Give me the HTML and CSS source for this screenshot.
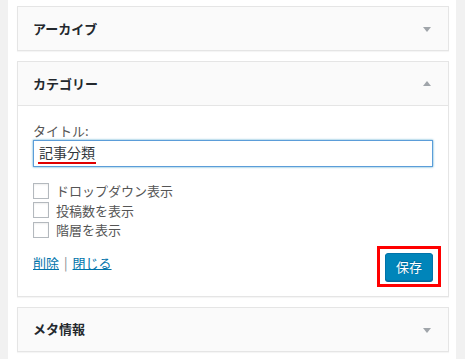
FILE: index.html
```html
<!DOCTYPE html>
<html lang="ja">
<head>
  <meta charset="UTF-8">
  <meta name="viewport" content="width=device-width, initial-scale=1.0">
  <title>ウィジェット</title>
  <link rel="stylesheet" href="styles.css">
</head>
<body>
  <div class="sidebar">
    <!-- Archive widget (closed) -->
    <div class="widget">
      <div class="widget-top">
        <h3 class="widget-title">アーカイブ</h3>
        <span class="toggle down"></span>
      </div>
    </div>

    <!-- Category widget (open) -->
    <div class="widget">
      <div class="widget-top">
        <h3 class="widget-title">カテゴリー</h3>
        <span class="toggle up"></span>
      </div>
      <div class="widget-inside">
        <label class="field-label">タイトル:</label>
        <div class="title-field"><span class="typed">記事分類</span></div>

        <div class="options">
          <label class="option"><input type="checkbox"> ドロップダウン表示</label>
          <label class="option"><input type="checkbox"> 投稿数を表示</label>
          <label class="option"><input type="checkbox"> 階層を表示</label>
        </div>

        <div class="actions">
          <div class="links">
            <a href="#">削除</a><span class="sep">|</span><a href="#">閉じる</a>
          </div>
          <div class="highlight">
            <button class="save-btn">保存</button>
          </div>
        </div>
      </div>
    </div>

    <!-- Meta widget (closed) -->
    <div class="widget">
      <div class="widget-top">
        <h3 class="widget-title">メタ情報</h3>
        <span class="toggle down"></span>
      </div>
    </div>
  </div>
</body>
</html>
```

FILE: styles.css
```css
/* Base */
* {
  margin: 0;
  padding: 0;
  box-sizing: border-box;
}
body {
  background: #f1f1f1;
  font-family: "Noto Sans CJK JP", "Noto Sans", sans-serif;
  font-size: 13px;
  color: #444;
}

/* White column holding the widgets */
.sidebar {
  width: 448px;
  min-height: 100vh;
  margin-left: 8px;
  padding: 6px 7px 0 9px;
  background: #fff;
  display: flex;
  flex-direction: column;
  gap: 10px;
}

/* Widget box */
.widget {
  border: 1px solid #e5e5e5;
  background: #fff;
  box-shadow: 0 1px 1px rgba(0, 0, 0, 0.04);
}
.widget-top {
  height: 43px;
  display: flex;
  align-items: center;
  justify-content: space-between;
  padding: 0 17px 0 15px;
  background: #fafafa;
}
.widget-inside {
  border-top: 1px solid #e5e5e5;
  padding: 0 15px 9px;
}
.widget-title {
  font-size: 13px;
  font-weight: bold;
  color: #23282d;
  line-height: 18px;
}

/* Arrow toggles */
.toggle {
  width: 0;
  height: 0;
  border-left: 4px solid transparent;
  border-right: 4px solid transparent;
}
.toggle.down {
  border-top: 5px solid #a0a5aa;
  margin-top: 2px;
}
.toggle.up {
  border-bottom: 5px solid #a0a5aa;
}

/* Title field */
.field-label {
  display: block;
  margin-top: 16px;
  line-height: 18px;
  color: #555;
}
.title-field {
  width: 400px;
  height: 27px;
  border: 1px solid #5b9dd9;
  box-shadow: 0 0 2px rgba(30, 140, 190, 0.8);
  padding: 0 4px;
  font-size: 14px;
  color: #32373c;
  background: #fff;
}
.typed {
  display: inline-block;
  margin-top: 2px;
  line-height: 18px;
  padding: 0 1px 1px;
  border-bottom: 2px solid #e00000;
}

/* Checkbox options */
.options {
  margin-top: 14px;
}
.option {
  display: flex;
  align-items: center;
  height: 19.5px;
  gap: 7px;
  color: #555;
}
.option input {
  appearance: none;
  width: 16px;
  height: 16px;
  border: 1px solid #b4b9be;
  background: #fff;
  box-shadow: inset 0 1px 2px rgba(0, 0, 0, 0.07);
}

/* Actions row */
.actions {
  margin-top: 6px;
  display: flex;
  justify-content: space-between;
  align-items: flex-start;
}
.links {
  margin-top: 8px;
  line-height: 18px;
}
.links a {
  color: #0073aa;
  text-decoration: underline;
}
.sep {
  padding: 0 5px;
  color: #82878c;
}
.highlight {
  border: 3px solid #f00;
  padding: 4px 5px 3px;
  margin-right: -8px;
}
.save-btn {
  display: block;
  width: 48px;
  height: 28px;
  background: #0085ba;
  border: 1px solid #0073aa;
  border-radius: 3px;
  box-shadow: 0 1px 0 #006799;
  color: #fff;
  font-family: inherit;
  font-size: 13px;
  text-shadow: 0 -1px 1px #006799;
}
```
